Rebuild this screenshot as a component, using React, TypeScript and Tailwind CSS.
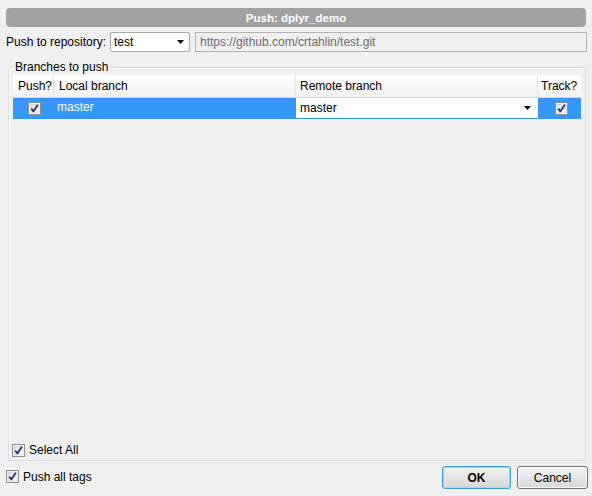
import React from "react";

function CheckBox({ checked = true }: { checked?: boolean }) {
  return (
    <svg width="13" height="13" viewBox="0 0 13 13" className="shrink-0 block">
      <defs>
        <linearGradient id="cbg" x1="0" y1="0" x2="1" y2="1">
          <stop offset="0" stopColor="#dcdcdc" />
          <stop offset="1" stopColor="#ffffff" />
        </linearGradient>
      </defs>
      <rect x="0.5" y="0.5" width="12" height="12" fill="#ffffff" stroke="#8e8f8f" />
      <rect x="2" y="2" width="9" height="9" fill="url(#cbg)" stroke="#c6c6c6" strokeWidth="0.6" />
      {checked && (
        <path d="M3.2 6.6 L5.4 9.4 L9.8 2.8" fill="none" stroke="#2a2a80" strokeWidth="1.8" strokeLinejoin="round" />
      )}
    </svg>
  );
}

function DownArrow() {
  return (
    <svg width="7" height="4" viewBox="0 0 7 4" className="block shrink-0">
      <path d="M0 0 H7 L3.5 4 Z" fill="#000" />
    </svg>
  );
}

export default function App() {
  return (
    <div className="w-[592px] h-[496px] bg-[#f0f0f0] text-[12px] leading-[14px] text-black font-['Liberation_Sans',Arial,sans-serif] flex flex-col overflow-hidden">
      {/* Title */}
      <div className="mt-[8px] mx-[6px] h-[19px] rounded-[4px] bg-[#a2a2a2] text-white text-[11.5px] font-bold flex items-center justify-center">
        Push: dplyr_demo
      </div>

      {/* Repository row */}
      <div className="mt-[5px] ml-[6px] mr-[5px] h-[20px] flex items-center">
        <span className="w-[104px] shrink-0">Push to repository:</span>
        <div className="w-[80px] h-[20px] shrink-0 bg-white border border-[#a9a9a9] rounded-[2px] flex items-center pl-[3px] pr-[5px]">
          <span className="flex-1">test</span>
          <DownArrow />
        </div>
        <div className="ml-[5px] flex-1 h-[20px] border border-[#b4b4b4] bg-[#f0f0f0] text-[#6d6d6d] flex items-center pl-[4px]">
          https://github.com/crtahlin/test.git
        </div>
      </div>

      {/* Branches group */}
      <fieldset className="mt-[8px] ml-[8px] w-[578px] border border-[#d5dfe5] rounded-[3px] px-[4px] pb-0 shadow-[inset_1px_1px_0_#ffffff]">
        <legend className="px-[2px] leading-[14px]">Branches to push</legend>
        <div className="h-[386px] flex flex-col">
          {/* Table header */}
          <div className="mt-[1px] grid grid-cols-[41px_242px_242px_43px] h-[23px] bg-gradient-to-b from-white to-[#f2f2f2] border-b border-[#d5d5d5]">
            <div className="pl-[5px] flex items-center border-r border-[#e3e3e3]">Push?</div>
            <div className="pl-[5px] flex items-center border-r border-[#e3e3e3]">Local branch</div>
            <div className="pl-[4px] flex items-center border-r border-[#e3e3e3]">Remote branch</div>
            <div className="pl-[3px] flex items-center">Track?</div>
          </div>
          {/* Row */}
          <div className="grid grid-cols-[41px_242px_242px_43px] h-[21px] bg-[#3399ff]">
            <div className="flex items-center justify-center pl-[1px]">
              <CheckBox />
            </div>
            <div className="pl-[3px] pt-[2px] text-white">master</div>
            <div className="bg-white flex items-center pl-[4px] pr-[7px] mb-[1px]">
              <span className="flex-1">master</span>
              <DownArrow />
            </div>
            <div className="flex items-center justify-center pl-[3px]">
              <CheckBox />
            </div>
          </div>
          <div className="flex-1" />
          {/* Select all */}
          <div className="-ml-[1px] mb-[3px] flex items-center gap-[4px]">
            <CheckBox />
            <span>Select All</span>
          </div>
        </div>
      </fieldset>

      {/* Bottom row */}
      <div className="mt-[5px] ml-[6px] mr-[4px] h-[23px] flex items-center">
        <div className="flex items-center gap-[4px] -mt-[2px]">
          <CheckBox />
          <span>Push all tags</span>
        </div>
        <div className="ml-auto flex gap-[6px]">
          <button className="w-[69px] h-[23px] rounded-[3px] border border-[#3c9ed4] shadow-[inset_0_0_0_1px_#8fe0f7] bg-gradient-to-b from-[#f2f2f2] to-[#d8d8d8] font-bold">
            OK
          </button>
          <button className="w-[71px] h-[23px] rounded-[3px] border border-[#707070] shadow-[inset_0_0_0_1px_#fcfcfc] bg-gradient-to-b from-[#f2f2f2] to-[#d8d8d8]">
            Cancel
          </button>
        </div>
      </div>
    </div>
  );
}
